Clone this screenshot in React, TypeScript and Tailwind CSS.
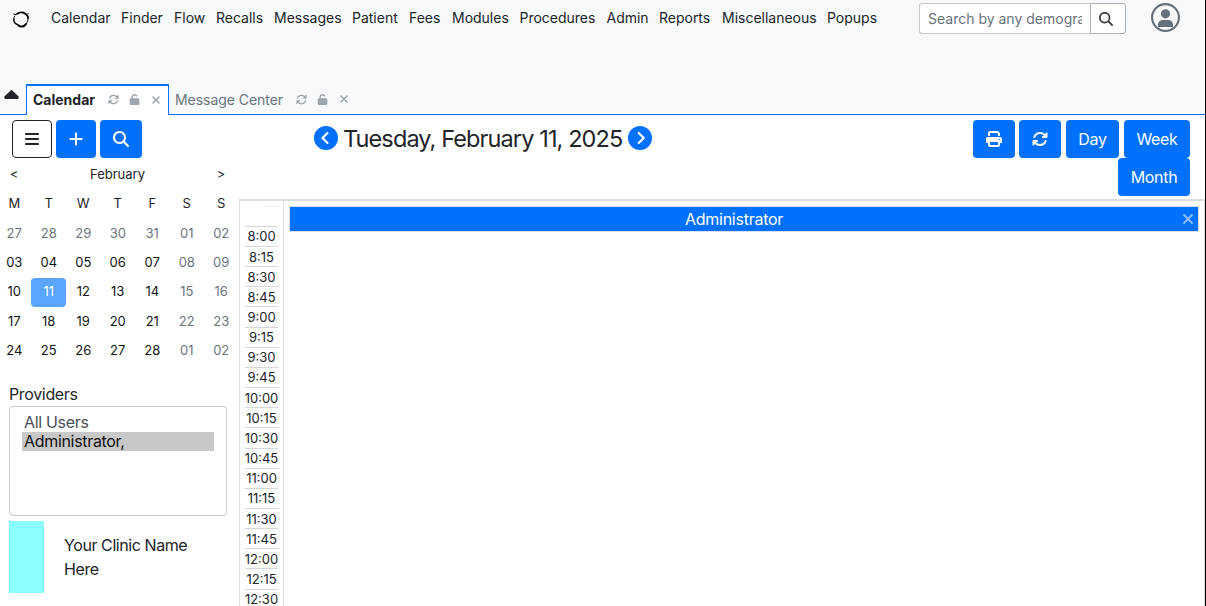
import React from "react";
import {
  FaArrowsRotate,
  FaBars,
  FaMagnifyingGlass,
  FaPlus,
  FaPrint,
  FaUnlock,
  FaXmark,
} from "react-icons/fa6";

const menu: [string, string][] = [
  ["Calendar", "w-[70px]"],
  ["Finder", "w-[53px]"],
  ["Flow", "w-[42px]"],
  ["Recalls", "w-[58px]"],
  ["Messages", "w-[78px]"],
  ["Patient", "w-[57px]"],
  ["Fees", "w-[43px]"],
  ["Modules", "w-[67.500px]"],
  ["Procedures", "w-[87px]"],
  ["Admin", "w-[52.500px]"],
  ["Reports", "w-[63px]"],
  ["Miscellaneous", "w-[105px]"],
  ["Popups", "w-[60px]"],
];

const weeks = [
  ["27", "28", "29", "30", "31", "01", "02"],
  ["03", "04", "05", "06", "07", "08", "09"],
  ["10", "11", "12", "13", "14", "15", "16"],
  ["17", "18", "19", "20", "21", "22", "23"],
  ["24", "25", "26", "27", "28", "01", "02"],
];

const times = Array.from({ length: 19 }, (_, i) => {
  const minutes = 8 * 60 + i * 15;
  return `${Math.floor(minutes / 60)}:${String(minutes % 60).padStart(2, "0")}`;
});

function Logo() {
  return (
    <svg className="block h-[18px] w-[18px]" viewBox="0 0 18 18" fill="none" stroke="#000" strokeLinecap="round">
      <path d="M5.300 2.800C7.500 1 11 1 13.300 2.700C15.500 4.300 16.300 5.500 16 7" strokeWidth="1.900" />
      <path d="M16 7.500C16 9.500 15.400 11.200 14.300 12.500" strokeWidth="1" />
      <path d="M14 13C12.300 15.900 8.500 16.300 6.400 14.400" strokeWidth="2" />
      <path d="M5.800 13.800C3 12.800 1.600 10.500 1.900 8.200" strokeWidth="1.500" />
      <path d="M1.900 8C1.900 6.800 2.200 5.800 2.700 5" strokeWidth="1" />
      <path d="M1.500 3C2.200 3.900 3.800 3.600 4.900 3M15.400 3.200L16.200 2.400" strokeWidth="1" />
    </svg>
  );
}

function UserIcon() {
  return (
    <svg className="block h-[29px] w-[29px]" viewBox="0 0 29 29">
      <circle cx="14.500" cy="14.500" r="13.400" fill="none" stroke="#66707a" strokeWidth="2.100" />
      <circle cx="14.500" cy="10.800" r="4.600" fill="#66707a" />
      <path d="M7 24v-2.200c0-3 2.500-4.800 5-4.800h5c2.500 0 5 1.800 5 4.800V24z" fill="#66707a" />
    </svg>
  );
}

function TabIcons() {
  return (
    <div className="flex items-center text-[#9da5ad]">
      <FaArrowsRotate className="h-[11px] w-[11px]" />
      <FaUnlock className="ml-[10px] h-[11px] w-[11px]" />
      <FaXmark className="ml-[10px] h-[12px] w-[12px]" />
    </div>
  );
}

function Circle({ dir }: { dir: "left" | "right" }) {
  return (
    <svg className="block h-6 w-6 shrink-0" viewBox="0 0 24 24">
      <circle cx="12" cy="12" r="12" fill="#0070ff" />
      <path
        d={dir === "left" ? "M13.500 7L8.500 12l5 5" : "M10.700 7l5 5-5 5"}
        fill="none"
        stroke="#fff"
        strokeWidth="2.200"
        strokeLinecap="round"
        strokeLinejoin="round"
      />
    </svg>
  );
}

const blue = "flex h-[38px] items-center justify-center rounded bg-[#0070ff] text-white";

export default function App() {
  return (
    <div className="flex h-[606px] w-[1206px] flex-col overflow-hidden border-r border-black bg-white font-['Inter',sans-serif] text-[#212529]">
      <header className="flex h-[115px] shrink-0 flex-col border-b border-[#0070ff] bg-[#f7f9fb]">
        <div className="flex h-[84px] shrink-0 items-start">
          <div className="w-[51px] pt-[11px] pl-3">
            <Logo />
          </div>
          <nav className="flex w-[868px] pt-[8px] text-[14px] leading-5">
            {menu.map(([label, width]) => (
              <span key={label} className={`${width} shrink-0 whitespace-nowrap tracking-[-0.01px]`}>{label}</span>
            ))}
          </nav>
          <div className="mt-[3px] flex h-[31px] w-[207px] shrink-0">
            <div className="w-[171px] rounded-l-[3px] border border-r-0 border-[#c4cad0] bg-white px-2 text-[14px] leading-[30px] text-[#69727a]">
              <div className="overflow-hidden whitespace-nowrap">Search by any demographics</div>
            </div>
            <div className="flex w-[36px] items-center rounded-r-[3px] border border-[#a9aeb8] bg-white pl-[8px]">
              <FaMagnifyingGlass className="h-[14px] w-[14px] text-[#343a40]" />
            </div>
          </div>
          <div className="ml-[25px] pt-[3px]">
            <UserIcon />
          </div>
        </div>
        <div className="flex h-[30px] shrink-0">
          <div className="w-[26px] pt-[6px] pl-1">
            <svg className="block h-[9px] w-[15px]" viewBox="0 0 15 9">
              <path d="M6.700.4Q7.500-.2 8.300.4L14.600 6.500Q15.200 8.800 13.500 9H1.500Q-.2 8.800.4 6.500z" fill="#212529" />
            </svg>
          </div>
          <div className="-mb-px flex w-[143px] items-center border-x border-t-2 border-[#0070ff] bg-white pb-[2px] pl-[6px]">
            <span className="w-[75px] text-[14px] font-bold">Calendar</span>
            <TabIcons />
          </div>
          <div className="flex items-center pl-[6px]">
            <span className="w-[121px] whitespace-nowrap text-[14px] tracking-[-0.05px] text-[#6c757d]">Message Center</span>
            <TabIcons />
          </div>
        </div>
      </header>

      <div className="flex h-[491px]">
        <aside className="flex w-[239px] shrink-0 flex-col pt-[5px]">
          <div className="flex gap-1 pl-3">
            <div className="flex h-[38px] w-[40px] items-center justify-center rounded border border-[#212529]">
              <FaBars className="h-[16px] w-[16px]" />
            </div>
            <div className={`${blue} w-[40px]`}><FaPlus className="h-[16px] w-[16px]" /></div>
            <div className={`${blue} w-[42px]`}><FaMagnifyingGlass className="h-[16px] w-[16px]" /></div>
          </div>
          <div className="flex h-[31px] items-center pt-[2px] text-[13px]">
            <span className="w-[28px] text-center">&lt;</span>
            <span className="w-[179px] text-center">February</span>
            <span className="w-[28px] text-center">&gt;</span>
          </div>
          <div className="-ml-[3px] grid h-[29px] w-[241.5px] grid-cols-7 items-center pt-px text-center text-[13px]">
            {["M", "T", "W", "T", "F", "S", "S"].map((day, i) => <span key={i}>{day}</span>)}
          </div>
          <div className="-ml-[3px] mt-px flex w-[241.5px] flex-col text-[13px]">
            {weeks.map((week, w) => (
              <div key={w} className="grid h-[29.300px] grid-cols-7">
                {week.map((day, d) => (
                  <span
                    key={d}
                    className={
                      day === "11"
                        ? "-ml-[0.5px] flex items-center justify-center rounded bg-[#5ca5ff] pl-[0.5px] text-white"
                        : w === 0 || d > 4
                          ? "flex items-center justify-center text-[#6c757d]"
                          : "flex items-center justify-center text-[#111315]"
                    }
                  >
                    {day}
                  </span>
                ))}
              </div>
            ))}
          </div>
          <div className="mt-[17px] pl-[9px] text-base leading-6 tracking-[-0.35px]">Providers</div>
          <div className="ml-[9px] h-[110px] w-[218px] shrink-0 rounded border border-[#c6ccd3] px-3 pt-[6px] text-base leading-[19px] tracking-[-0.32px]">
            <div className="pl-[2px] text-[#495057]">All Users</div>
            <div className="bg-[#c8c8c8] pl-[2px] text-[#101010]">Administrator,</div>
          </div>
          <div className="mt-[5px] flex pl-[9px]">
            <div className="h-[72px] w-[35px] bg-[#8cffff]" />
            <div className="w-[150px] pt-[12px] pl-5 text-base leading-6 tracking-[-0.42px]">Your Clinic Name Here</div>
          </div>
        </aside>

        <main className="flex w-[966px] shrink-0 flex-col">
          <div className="flex h-[84px] shrink-0 pt-[5px]">
            <div className="flex h-[38px] w-[734px] items-center pb-[2px] pl-[75px]">
              <Circle dir="left" />
              <h1 className="w-[290px] shrink-0 whitespace-nowrap pt-[2px] pl-[5px] text-[23.500px] leading-[38px] tracking-[-0.89px]">Tuesday, February 11, 2025</h1>
              <Circle dir="right" />
            </div>
            <div className="flex w-[217px] flex-col items-end text-base tracking-[-0.3px]">
              <div className="flex">
                <div className={`${blue} mr-1 w-[42px]`}><FaPrint className="h-[16px] w-[16px]" /></div>
                <div className={`${blue} mr-[5px] w-[42px]`}><FaArrowsRotate className="h-[16px] w-[16px]" /></div>
                <div className={`${blue} mr-[5px] w-[53px]`}>Day</div>
                <div className={`${blue} w-[66px]`}>Week</div>
              </div>
              <div className={`${blue} w-[72px]`}>Month</div>
            </div>
          </div>
          <div className="flex flex-1 border border-t-2 border-b-0 border-[#dcdfe3]">
            <div className="w-[43px] shrink-0 pl-[5px]">
              <div className="flex h-[24.800px] justify-end pt-[5px] pr-[4px]">
                <div className="h-px w-[14px] bg-[#edf0f2]" />
              </div>
              {times.map((time) => (
                <div key={time} className="flex h-[20.170px] w-[33px] items-center justify-center border-t border-[#d4d8dc] text-[13px] leading-5">
                  {time}
                </div>
              ))}
            </div>
            <div className="flex-1 border-l border-[#dcdfe3] pt-[5px] pr-[5px] pl-[5px]">
              <div className="flex h-[26px] items-center border border-[#d9e0e5] bg-[#0070ff] text-white">
                <div className="w-[888px] text-center text-[16px] tracking-[-0.25px]">Administrator</div>
                <FaXmark className="ml-[2px] h-[16px] w-[16px] text-[#8abcfb]" />
              </div>
            </div>
          </div>
        </main>
      </div>
    </div>
  );
}
